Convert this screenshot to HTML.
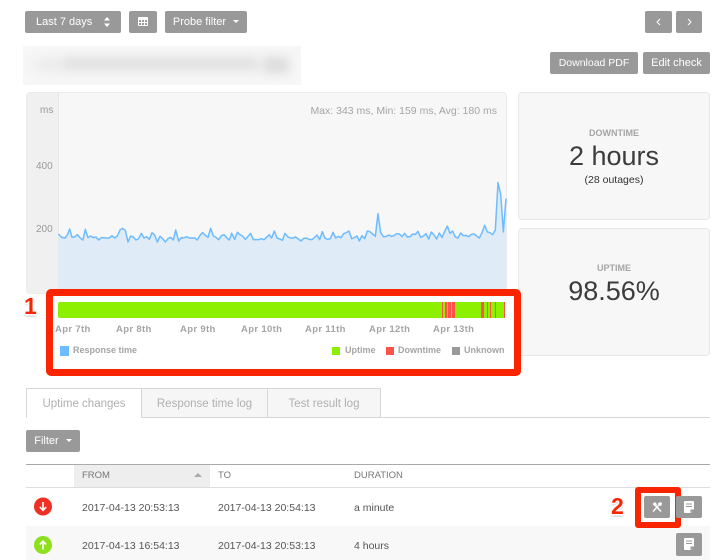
<!DOCTYPE html>
<html><head><meta charset="utf-8"><style>
html,body{margin:0;padding:0;background:#fff}
body{width:719px;height:560px;position:relative;overflow:hidden;font-family:"Liberation Sans",Arial,sans-serif;color:#555}
.a{position:absolute;white-space:nowrap}
.b{position:absolute;background:#999;color:#fff;border-radius:2px;height:22px;line-height:23px;font-size:11px;text-align:center;white-space:nowrap;box-sizing:border-box}
.caret{display:inline-block;width:0;height:0;border-left:3.5px solid transparent;border-right:3.5px solid transparent;border-top:3.5px solid #fff;vertical-align:2px;margin-left:7px}
.panel{position:absolute;left:518px;width:192px;height:128px;background:#f7f7f7;border:1px solid #e8e8e8;border-radius:4px;box-sizing:border-box;text-align:center}
.lab{position:absolute;left:0;right:0;font-size:9px;font-weight:bold;color:#a5a5a5}
.big{position:absolute;left:0;right:0;font-size:27px;color:#3c3c3c;line-height:30px}
.date{position:absolute;top:324px;font-size:9.5px;font-weight:bold;color:#a5a5a5;letter-spacing:.35px;white-space:nowrap}
.leg{position:absolute;top:345px;font-size:9px;font-weight:bold;color:#a5a5a5;white-space:nowrap}
.sq{position:absolute;width:8px;height:8px}
.tab{position:absolute;top:388px;height:30px;box-sizing:border-box;border:1px solid #d6d6d6;background:#f6f6f6;color:#b0b0b0;font-size:11.5px;line-height:31px;text-align:center}
.td{position:absolute;font-size:10.5px;color:#555;white-space:nowrap}
.th{position:absolute;top:470px;font-size:9.5px;color:#777;white-space:nowrap}
.num{position:absolute;font-weight:bold;font-size:23px;color:#fa2500;text-shadow:-1.5px 0 #fff,1.5px 0 #fff,0 -1.5px #fff,0 1.5px #fff,1px 1px #fff,-1px -1px #fff,1px -1px #fff,-1px 1px #fff,0 2px 2px #aaa}
.st{position:absolute;top:302px;height:16px;background:#ff5248}
</style></head><body>

<div class="b" style="left:25px;top:11px;width:96px;text-align:left;padding-left:11px">Last 7 days
<svg style="position:absolute;left:78px;top:6px" width="8" height="10"><path d="M4 0L7 3.5H1ZM4 10L1 6.5H7Z" fill="#fff"/></svg></div>
<div class="b" style="left:129px;top:11px;width:28px"><svg style="position:absolute;left:9px;top:6px" width="10" height="9"><rect width="10" height="9" rx="1" fill="#fff"/><g fill="#999"><rect x="1" y="3" width="2" height="2"/><rect x="4" y="3" width="2" height="2"/><rect x="7" y="3" width="2" height="2"/><rect x="1" y="6" width="2" height="2"/><rect x="4" y="6" width="2" height="2"/><rect x="7" y="6" width="2" height="2"/></g></svg></div>
<div class="b" style="left:165px;top:11px;width:82px">Probe filter<span class="caret"></span></div>
<div class="b" style="left:645px;top:11px;width:27px"><svg style="position:absolute;left:11px;top:7px" width="5" height="8"><path d="M4 1L1 4L4 7" fill="none" stroke="#fff"/></svg></div>
<div class="b" style="left:676px;top:11px;width:26px"><svg style="position:absolute;left:11px;top:7px" width="5" height="8"><path d="M1 1L4 4L1 7" fill="none" stroke="#fff"/></svg></div>
<div class="b" style="left:550px;top:52px;width:88px;font-size:10.5px">Download PDF</div>
<div class="b" style="left:643px;top:52px;width:67px">Edit check</div>

<div class="a" style="left:23px;top:46px;width:278px;height:39px;background:#f7f7f7;overflow:hidden">
<div class="a" style="left:12px;top:14px;width:250px;height:10px;background:#e6e6e6;filter:blur(6px)"></div>
<div class="a" style="left:242px;top:12px;width:24px;height:14px;background:#dcdcdc;filter:blur(5px)"></div>
<div class="a" style="left:42px;top:13px;width:190px;height:8px;background:#dedede;filter:blur(5px)"></div>
</div>

<div class="a" style="left:26px;top:92px;width:481px;height:202px;background:#f7f7f7;border:1px solid #ececec;box-sizing:border-box;border-radius:4px;overflow:hidden">
<div class="a" style="left:0;top:0;width:31px;height:202px;background:#f0f0f0;border-right:1px solid #e6e6e6"></div>
</div>
<div class="a" style="left:40px;top:105px;font-size:10px;color:#999">ms</div>
<div class="a" style="left:36px;top:161px;font-size:10px;color:#999">400</div>
<div class="a" style="left:36px;top:224px;font-size:10px;color:#999">200</div>
<div class="a" style="right:222px;top:105px;font-size:10.5px;color:#a5a5a5">Max: 343 ms, Min: 159 ms, Avg: 180 ms</div>

<svg class="a" style="left:0;top:0" width="719" height="560">
<g transform="translate(40,170) scale(.33333)">
<polygon fill="#dfebf7" points="55,192 65,202 75,204 82,195 89,177 96,202 105,200 112,194 120,203 129,210 136,178 144,203 152,198 160,203 168,201 176,210 184,203 200,204 208,204 216,197 224,204 232,198 240,180 248,175 256,181 264,216 272,198 280,201 288,210 296,206 304,190 312,204 320,200 328,208 336,188 344,195 352,216 360,199 368,206 376,216 384,206 392,202 400,210 407,180 416,213 424,203 432,204 440,200 448,204 464,204 472,210 480,196 488,188 496,196 504,202 512,175 520,198 528,202 536,209 544,197 552,194 560,203 568,210 575,190 584,208 592,187 600,194 608,198 616,208 632,190 640,209 656,209 664,206 672,209 688,194 696,202 696,370 55,370"/>
<polyline fill="none" stroke="#6dbcff" stroke-width="4.5" stroke-linejoin="round" points="55,192 65,202 75,204 82,195 89,177 96,202 105,200 112,194 120,203 129,210 136,178 144,203 152,198 160,203 168,201 176,210 184,203 200,204 208,204 216,197 224,204 232,198 240,180 248,175 256,181 264,216 272,198 280,201 288,210 296,206 304,190 312,204 320,200 328,208 336,188 344,195 352,216 360,199 368,206 376,216 384,206 392,202 400,210 407,180 416,213 424,203 432,204 440,200 448,204 464,204 472,210 480,196 488,188 496,196 504,202 512,175 520,198 528,202 536,209 544,197 552,194 560,203 568,210 575,190 584,208 592,187 600,194 608,198 616,208 632,190 640,209 656,209 664,206 672,209 688,194 690,198"/>
</g>
<g transform="translate(270,170) scale(.33333)">
<polygon fill="#dfebf7" points="0,198 5,204 13,183 21,204 30,207 37,211 45,190 53,200 61,204 69,204 77,201 85,207 93,213 101,205 109,204 117,208 125,209 133,203 141,195 149,209 157,185 165,205 173,208 181,206 189,187 197,204 205,199 213,203 221,191 229,188 237,183 245,206 253,203 261,198 268,213 276,197 284,206 292,183 300,185 308,192 316,199 324,131 332,188 340,200 348,200 356,195 364,199 372,197 380,191 388,192 396,200 404,190 412,201 420,200 428,192 436,193 444,184 452,202 460,198 468,191 476,207 484,186 492,195 500,207 508,189 516,202 532,168 540,190 548,183 556,201 564,204 572,189 580,197 588,196 596,200 604,193 612,192 620,198 628,204 636,188 644,166 652,186 660,188 668,194 676,180 684,38 692,72 700,186 708,86 708,370 0,370"/>
<polyline fill="none" stroke="#6dbcff" stroke-width="4.5" stroke-linejoin="round" points="0,198 5,204 13,183 21,204 30,207 37,211 45,190 53,200 61,204 69,204 77,201 85,207 93,213 101,205 109,204 117,208 125,209 133,203 141,195 149,209 157,185 165,205 173,208 181,206 189,187 197,204 205,199 213,203 221,191 229,188 237,183 245,206 253,203 261,198 268,213 276,197 284,206 292,183 300,185 308,192 316,199 324,131 332,188 340,200 348,200 356,195 364,199 372,197 380,191 388,192 396,200 404,190 412,201 420,200 428,192 436,193 444,184 452,202 460,198 468,191 476,207 484,186 492,195 500,207 508,189 516,202 532,168 540,190 548,183 556,201 564,204 572,189 580,197 588,196 596,200 604,193 612,192 620,198 628,204 636,188 644,166 652,186 660,188 668,194 676,180 684,38 692,72 700,186 708,86"/>
</g>
</svg>

<div class="panel" style="top:92px"><div class="lab" style="top:35px">DOWNTIME</div><div class="big" style="top:48px">2 hours</div><div class="a" style="left:0;right:0;top:81px;font-size:10.5px;color:#333">(28 outages)</div></div>
<div class="panel" style="top:228px"><div class="lab" style="top:34px">UPTIME</div><div class="big" style="top:47px">98.56%</div></div>

<div class="a" style="left:46px;top:289px;width:475px;height:87px;background:#fff;border:7px solid #fa2500;box-sizing:border-box;border-radius:5px"></div>
<div class="a" style="left:58px;top:302px;width:447px;height:16px;background:#8cf000;border-radius:2px 0 0 2px"></div>
<div class="st" style="left:442px;width:1px"></div>
<div class="st" style="left:445px;width:2px"></div>
<div class="st" style="left:448px;width:3px"></div>
<div class="st" style="left:452px;width:3px"></div>
<div class="st" style="left:481px;width:3px"></div>
<div class="st" style="left:487px;width:1px"></div>
<div class="st" style="left:490px;width:1px"></div>
<div class="st" style="left:495px;width:1px"></div>
<div class="st" style="left:504px;width:1px"></div>
<div class="date" style="left:55px">Apr 7th</div>
<div class="date" style="left:116px">Apr 8th</div>
<div class="date" style="left:180px">Apr 9th</div>
<div class="date" style="left:241px">Apr 10th</div>
<div class="date" style="left:305px">Apr 11th</div>
<div class="date" style="left:369px">Apr 12th</div>
<div class="date" style="left:433px">Apr 13th</div>
<div class="sq" style="left:60px;top:346px;width:9px;height:10px;background:#6dbcff"></div>
<div class="leg" style="left:73px">Response time</div>
<div class="sq" style="left:332px;top:347px;background:#8cf000"></div><div class="leg" style="left:345px">Uptime</div>
<div class="sq" style="left:386px;top:347px;background:#ff5248"></div><div class="leg" style="left:398px">Downtime</div>
<div class="sq" style="left:452px;top:347px;background:#999"></div><div class="leg" style="left:464px">Unknown</div>
<div class="num" style="left:24px;top:293px">1</div>

<div class="a" style="left:26px;top:417px;width:684px;height:1px;background:#d6d6d6"></div>
<div class="tab" style="left:26px;width:116px;background:#fff;border-bottom:1px solid #fff">Uptime changes</div>
<div class="tab" style="left:141px;width:127px">Response time log</div>
<div class="tab" style="left:267px;width:114px">Test result log</div>
<div class="b" style="left:26px;top:430px;width:54px">Filter<span class="caret"></span></div>

<div class="a" style="left:26px;top:464px;width:684px;height:1px;background:#aaa"></div>
<div class="a" style="left:74px;top:465px;width:136px;height:22px;background:#eee"></div>
<div class="a" style="left:26px;top:487px;width:684px;height:1px;background:#ddd"></div>
<div class="a" style="left:26px;top:526px;width:684px;height:34px;background:#f8f8f8"></div>
<div class="th" style="left:82px">FROM</div>
<svg class="a" style="left:194px;top:473px" width="8" height="5"><path d="M4 0L8 4H0Z" fill="#aaa"/></svg>
<div class="th" style="left:218px">TO</div>
<div class="th" style="left:354px">DURATION</div>

<svg class="a" style="left:34px;top:497px" width="18" height="19"><circle cx="9" cy="9.5" r="9" fill="#f03024"/><path d="M9 5V13M5.8 10L9 13.3L12.2 10" fill="none" stroke="#fff" stroke-width="1.6"/></svg>
<svg class="a" style="left:34px;top:536px" width="18" height="18"><circle cx="9" cy="9" r="9" fill="#8ee01e"/><path d="M9 13.5V5.5M5.8 8.5L9 5.2L12.2 8.5" fill="none" stroke="#fff" stroke-width="1.6"/></svg>

<div class="td" style="left:82px;top:502px">2017-04-13 20:53:13</div>
<div class="td" style="left:218px;top:502px">2017-04-13 20:54:13</div>
<div class="td" style="left:354px;top:502px">a minute</div>
<div class="td" style="left:82px;top:540px">2017-04-13 16:54:13</div>
<div class="td" style="left:218px;top:540px">2017-04-13 20:53:13</div>
<div class="td" style="left:354px;top:540px">4 hours</div>

<div class="a" style="left:635px;top:487px;width:46px;height:41px;border:6px solid #fa2500;box-sizing:border-box;border-radius:3px;background:#fff"></div>
<div class="b" style="left:644px;top:496px;width:26px">
<svg style="position:absolute;left:7px;top:5px" width="12" height="12"><path d="M2 10.5L7.5 4.5M10 10.5L4.5 4.5" stroke="#fff" stroke-width="1.5" fill="none"/><path d="M1.5 3L4 1L6 3.5L4 5.5ZM6.5 3L9 1L11 2L10.5 4.5L8.5 5Z" fill="#fff"/></svg></div>
<div class="b" style="left:676px;top:496px;width:26px"><svg style="position:absolute;left:8px;top:5px" width="10" height="12"><path d="M0 1Q0 0 1 0H9Q10 0 10 1V8L7 12H1Q0 12 0 11Z" fill="#fff"/><path d="M2 3H8M2 5.5H8" stroke="#999"/><path d="M6.5 12V8.5H10" fill="#999"/></svg></div>
<div class="b" style="left:676px;top:533px;width:26px;height:23px"><svg style="position:absolute;left:8px;top:5px" width="10" height="12"><path d="M0 1Q0 0 1 0H9Q10 0 10 1V8L7 12H1Q0 12 0 11Z" fill="#fff"/><path d="M2 3H8M2 5.5H8" stroke="#999"/><path d="M6.5 12V8.5H10" fill="#999"/></svg></div>
<div class="num" style="left:611px;top:493px">2</div>

</body></html>
